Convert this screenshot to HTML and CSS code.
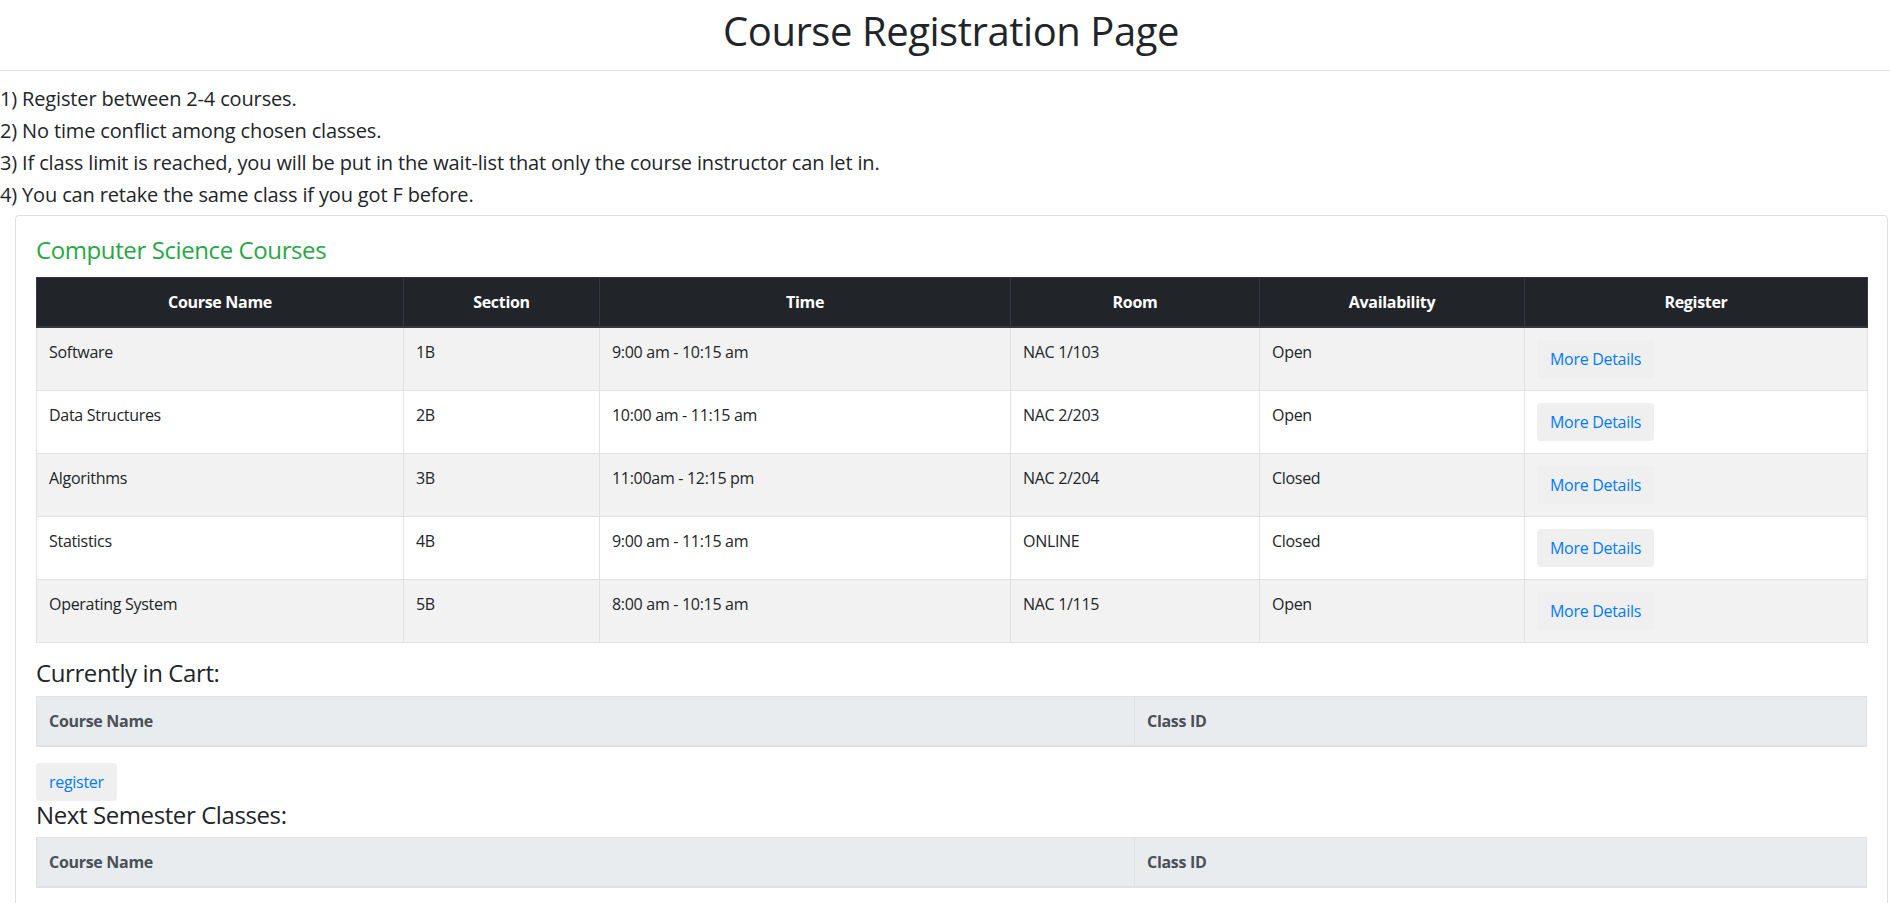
FILE: index.html
```html
<!DOCTYPE html>
<html lang="en">
<head>
<meta charset="utf-8">
<title>Course Registration Page</title>
<link rel="stylesheet" href="styles.css">
</head>
<body>
<header class="page-header">
  <h1 class="page-title">Course Registration Page</h1>
</header>
<div class="rules">
  <h5 class="rule">1) Register between 2-4 courses.</h5>
  <h5 class="rule">2) No time conflict among chosen classes.</h5>
  <h5 class="rule">3) If class limit is reached, you will be put in the wait-list that only the course instructor can let in.</h5>
  <h5 class="rule">4) You can retake the same class if you got F before.</h5>
</div>
<div class="card">
  <div class="card-body">
    <h4 class="card-title">Computer Science Courses</h4>
    <table class="table table-bordered table-striped courses">
      <colgroup>
        <col class="c-name"><col class="c-section"><col class="c-time"><col class="c-room"><col class="c-avail"><col class="c-reg">
      </colgroup>
      <thead class="thead-dark">
        <tr><th>Course Name</th><th>Section</th><th>Time</th><th>Room</th><th>Availability</th><th>Register</th></tr>
      </thead>
      <tbody>
        <tr><td>Software</td><td>1B</td><td>9:00 am - 10:15 am</td><td>NAC 1/103</td><td>Open</td><td><button class="btn"><a href="#">More Details</a></button></td></tr>
        <tr><td>Data Structures</td><td>2B</td><td>10:00 am - 11:15 am</td><td>NAC 2/203</td><td>Open</td><td><button class="btn"><a href="#">More Details</a></button></td></tr>
        <tr><td>Algorithms</td><td>3B</td><td>11:00am - 12:15 pm</td><td>NAC 2/204</td><td>Closed</td><td><button class="btn"><a href="#">More Details</a></button></td></tr>
        <tr><td>Statistics</td><td>4B</td><td>9:00 am - 11:15 am</td><td>ONLINE</td><td>Closed</td><td><button class="btn"><a href="#">More Details</a></button></td></tr>
        <tr><td>Operating System</td><td>5B</td><td>8:00 am - 10:15 am</td><td>NAC 1/115</td><td>Open</td><td><button class="btn"><a href="#">More Details</a></button></td></tr>
      </tbody>
    </table>
    <h4 class="section-title">Currently in Cart:</h4>
    <table class="table table-bordered list">
      <colgroup><col class="l-name"><col class="l-id"></colgroup>
      <thead class="thead-light"><tr><th>Course Name</th><th>Class ID</th></tr></thead>
      <tbody></tbody>
    </table>
    <button class="btn"><a href="#">register</a></button>
    <h4 class="section-title">Next Semester Classes:</h4>
    <table class="table table-bordered list">
      <colgroup><col class="l-name"><col class="l-id"></colgroup>
      <thead class="thead-light"><tr><th>Course Name</th><th>Class ID</th></tr></thead>
      <tbody></tbody>
    </table>
  </div>
</div>
</body>
</html>
```
FILE: styles.css
```css
body {
  margin: 0;
  font-family: "Segoe UI", "Open Sans", "Noto Sans", sans-serif;
  font-size: 16px;
  line-height: 1.5;
  letter-spacing: -0.3px;
  color: #212529;
  background: #fff;
}

.page-header {
  padding: 7px 0 7px 12px;
  border-bottom: 1px solid #dee2e6;
  margin-bottom: 16px;
  text-align: center;
}

.page-title {
  margin: 0 0 8px;
  font-size: 40px;
  line-height: 1.2;
  font-weight: 500;
  letter-spacing: -0.45px;
}

.rule {
  margin: 0 0 8px;
  font-size: 20px;
  line-height: 1.2;
  font-weight: 500;
  letter-spacing: -0.15px;
}

.card {
  margin: 0 2px 40px 15px;
  border: 1px solid rgba(0, 0, 0, 0.125);
  border-radius: 4px;
}

.card-body {
  padding: 20px;
}

.card-title {
  margin: 0 0 12px;
  font-size: 24px;
  line-height: 1.2;
  font-weight: 500;
  letter-spacing: -0.4px;
  color: #28a745;
}

.section-title {
  margin: 0 0 8px;
  font-size: 24px;
  line-height: 1.2;
  font-weight: 500;
  letter-spacing: -0.4px;
  color: #212529;
}

.table {
  width: 100%;
  margin-bottom: 16px;
  border-collapse: collapse;
  table-layout: fixed;
}

.table th,
.table td {
  padding: 12px;
  border: 1px solid #dee2e6;
  vertical-align: top;
  text-align: left;
}

.table thead th {
  vertical-align: bottom;
  border-bottom-width: 2px;
  font-weight: 700;
}

.table .thead-dark th {
  background: #212529;
  color: #fff;
  border-color: #32383e;
  text-align: center;
}

.table .thead-light th {
  background: #e9ecef;
  color: #495057;
  border-color: #dee2e6;
}

.table-striped tbody tr:nth-of-type(odd) {
  background: rgba(0, 0, 0, 0.05);
}

.c-name { width: 367px; }
.c-section { width: 196px; }
.c-time { width: 411px; }
.c-room { width: 249px; }
.c-avail { width: 265px; }
.c-reg { width: 343px; }

.l-name { width: 60%; }
.l-id { width: 40%; }

.btn {
  display: inline-block;
  padding: 6px 12px;
  font-family: inherit;
  font-size: 16px;
  line-height: 1.5;
  letter-spacing: -0.3px;
  border: 1px solid transparent;
  border-radius: 4px;
  background: #efefef;
  cursor: pointer;
}

.btn a {
  color: #007bff;
  text-decoration: none;
}
```
